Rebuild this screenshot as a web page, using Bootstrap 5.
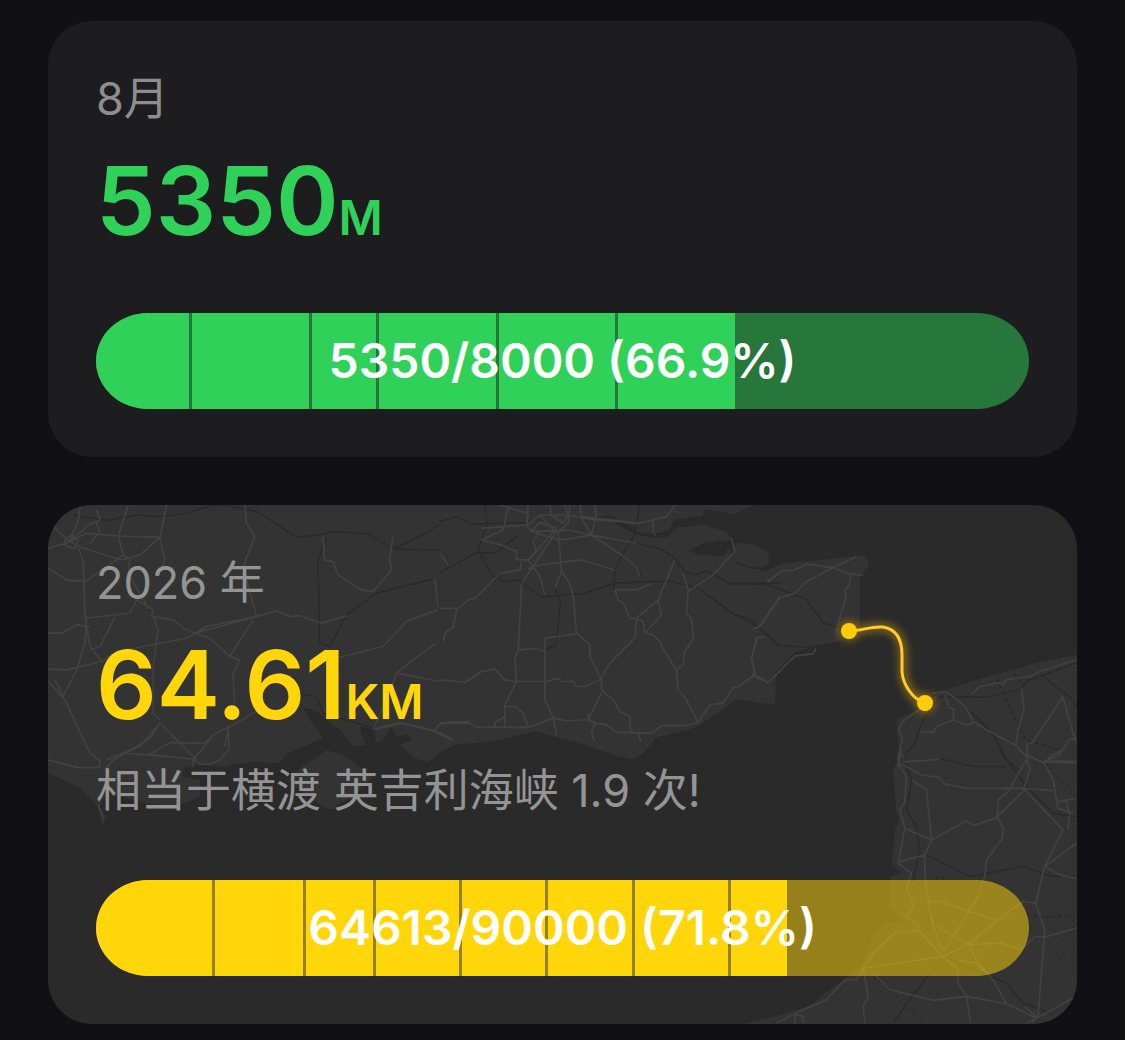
<!DOCTYPE html>
<html lang="zh-CN" data-bs-theme="dark">
<head>
<meta charset="utf-8">
<meta name="viewport" content="width=device-width, initial-scale=1">
<title>距离目标</title>
<link rel="stylesheet" href="https://cdn.jsdelivr.net/npm/bootstrap@5.3.0/dist/css/bootstrap.min.css">
<style>
  body { background: #111015; font-family: Inter, "Noto Sans CJK SC", sans-serif; }
  .goal-list { padding: 21px 48px 16px; gap: 48px; }
  .goal { background: #1d1d1f; border-radius: 44px; padding: 48px; }
  .goal-map { background: #2a2a2a; }
  .map-art { z-index: 0; }
  .goal-body { z-index: 1; }
  .period, .compare { font-size: 45px; line-height: 60px; font-weight: 400; color: #8e8e90; }
  .goal-map .period, .goal-map .compare { color: #949494; }
  .compare { padding: 16px 0 7px; }
  .total { font-size: 95px; line-height: 120px; font-weight: 600; margin: 12px 0 52px; }
  .total-map { margin-bottom: 0; }
  .compare + .meter { margin-top: 52px; }
  .unit { font-size: 48px; line-height: 1; }
  .meter { height: 96px; border-radius: 52px / 48px; }
  .seg { border-right: 3px solid transparent; background-clip: padding-box; }
  .seg:nth-last-child(2) { border-right: 0; }
  .meter-text { font-size: 48px; line-height: 96px; font-weight: 600; }
  .green-ink { color: #30d158; }
  .green-track { background: #27763b; }
  .green-track .seg { background-color: #30d158; }
  .yellow-ink { color: #ffd60a; }
  .yellow-track { background: rgba(255, 214, 10, .5); }
  .yellow-track .seg { background-color: #ffd60a; }
</style>
<script defer src="https://cdn.jsdelivr.net/npm/bootstrap@5.3.0/dist/js/bootstrap.bundle.min.js"></script>
</head>
<body>
<main class="goal-list d-flex flex-column">

  <section class="goal">
    <div class="period">8月</div>
    <div class="total green-ink">5350<span class="unit">M</span></div>
    <div class="meter green-track d-flex position-relative overflow-hidden" role="progressbar" aria-label="8月" aria-valuenow="5350" aria-valuemin="0" aria-valuemax="8000">
      <div class="seg" style="width:10.29%"></div>
      <div class="seg" style="width:12.86%"></div>
      <div class="seg" style="width:7.18%"></div>
      <div class="seg" style="width:12.86%"></div>
      <div class="seg" style="width:12.75%"></div>
      <div class="seg" style="width:12.54%"></div>
      <div class="meter-text position-absolute top-0 start-0 w-100 text-center text-white">5350/8000 (66.9%)</div>
    </div>
  </section>

  <section class="goal goal-map position-relative overflow-hidden">
    <svg class="map-art position-absolute top-0 start-0 w-100 h-100" viewBox="48 505 1029 519" preserveAspectRatio="xMidYMid slice" aria-hidden="true">
      <defs>
        <filter id="glow" x="-30%" y="-30%" width="160%" height="160%"><feGaussianBlur stdDeviation="4"/></filter>
      </defs>
      <!-- land -->
      <g fill="#333333">
        <path d="M48 505H753L735 514L706 509L702 516L675 519L669 530L655 534L640 533L620 522L605 517L620 526L635 534L652 538L668 537L678 527L705 525L727 532L733 540L718 541L704 543L688 551L700 555L724 556L728 548L733 557L736 542L755 545L768 552L770 563L760 568L745 565L734 561L738 565L765 571L785 563L840 558L866 555L869 565L860 576L860 622L842 641L815 646L795 652L776 672L775 705L736 699L725 708L695 728L655 738L645 752L633 759L620 757L585 745L535 731L500 740L455 745L440 752L428 763L413 757L400 745L411 740L408 734L398 737L391 727L382 741L376 743L374 728L360 727L365 745L353 746L340 730L329 722L318 712L303 707L310 720L323 738L303 747L287 753L280 763L253 762L220 767L200 764L183 768L183 777L200 780L200 797L173 807L140 802L107 793L100 807L107 818L102 825L98 807L80 788L48 773Z"/>
        <path d="M327 750L343 755L373 777L358 792L330 810L310 798L287 780L303 766Z"/>
        <path d="M745 1024L807 1007L843 980L860 967L873 937L887 923L903 921L890 907V877L902 873L892 865L895 827L900 822L896 810L893 770L899 758L897 718L920 710L940 692L960 685L1000 673L1040 662L1077 655V1024Z"/>
      </g>
      <!-- railways and motorways -->
      <g fill="none" stroke="#292929" stroke-width="4" stroke-linejoin="round">
        <g transform="translate(40 500) scale(.333)">
          <path d="M100 45L200 62L290 45L360 50L440 40L520 15L560 15L650 35L700 65L770 112L840 105L880 95L985 100L1060 147L1110 125L1200 75M860 115L835 180L840 430L870 440L920 345L1010 280L1190 235M770 580L830 590L850 640L950 670L1010 685M1060 147L1200 150"/>
        </g>
        <g transform="translate(440 500) scale(.333)">
          <path d="M0 65L50 50L95 72L260 68M135 15L142 70L115 150L155 225L190 245L235 240L305 292L435 280L525 250L690 243L775 265L885 345L925 355L1020 438M0 218L110 158L165 160L230 110M345 265L362 310L348 435L315 450M600 15L585 100L525 210L522 270M585 130L660 145L700 170L735 215L770 225L800 212L870 252L1020 250M430 60L510 48L590 90M545 165L590 200L610 235"/>
        </g>
        <g transform="translate(740 500) scale(.333)">
          <path d="M0 250L75 252L150 280L200 300L250 370L310 385M0 352L60 385L115 438L220 442L290 430M500 805L495 765L525 730L545 670L600 590L740 592L840 570L860 545L1010 490M640 590L720 660L770 720L800 780L850 820M910 530L1000 600L1010 620M820 520L840 545"/>
        </g>
        <g transform="translate(740 750) scale(.333)">
          <path d="M500 50L515 90L500 180L530 230L540 300L520 390L560 420L570 550M560 315L690 380L850 350L930 378L1010 380M600 25L700 50L800 50M780 0L860 110L940 190L1010 200M460 820L520 735L610 620L800 700L850 760L930 790"/>
          <path stroke-dasharray="8 10" d="M570 380L610 385L720 460L880 500L1000 500L1000 540L940 600L960 625L1010 585M370 660L430 700L550 820M920 40L960 90L1010 130M900 510L960 495"/>
        </g>
        <path stroke-width="2" stroke-dasharray="3 4" d="M997 679L1018 725L1026 740L1060 750"/>
      </g>
      <!-- roads -->
      <g fill="none" stroke="#424242" stroke-width="5" stroke-linejoin="round">
        <g transform="translate(40 500) scale(.333)">
          <path d="M90 125L40 80M90 125L25 145M90 125L115 60L120 20M90 125L145 75L180 60L170 30M90 125L140 100L235 108L360 112M90 125L130 145L245 180L300 165L360 112L380 15M75 120L95 105L115 120L105 145L80 140ZM165 60L180 95L150 130M235 108L250 60L265 15M235 108L250 165L200 200L135 245L80 240L25 205M115 145L130 185L135 350L150 440L190 490M135 355L270 340L290 300L340 330L335 350L400 360L430 385L465 400L650 350L610 200L645 110L620 70L615 15M225 350L180 440L150 450M25 400L65 400L110 375L150 380M250 165L270 180L265 220L325 325M360 112L375 180L360 215M340 350L355 390L340 500L340 640L360 660M25 508L80 510L185 485L230 455L440 415L500 380L650 350L710 333L750 350L780 347L845 370L920 348M465 400L510 415L570 470L640 360M570 470L600 480L580 520L585 650M25 545L75 600L150 760M45 540L70 590L110 510L135 430L140 350M360 670L430 740L470 780M360 670L300 740L200 780M565 685L640 640L685 615M565 685L555 740M850 110L855 180L880 185L895 225L965 270L1000 275L1055 210L1050 175L1060 110M1185 235L1195 320M870 480L910 470L950 460L1030 440L1100 365L1195 330M1200 545L1070 520L1120 480L1190 430M1070 520L1050 580L1000 690"/>
        </g>
        <g transform="translate(440 500) scale(.333)">
          <path d="M205 20L190 90L125 120L185 135L230 155L230 180H265L350 85M125 85L265 75L300 45H390L430 55L600 70L640 60L680 50L705 15M180 15L265 40L260 75L275 95L385 90L455 105L590 130M265 15L260 75M330 15L335 45L370 70L385 45L375 15M390 15L385 70L350 100L300 45M350 85L300 68L275 92L295 98L280 125L290 155L265 180L300 230L315 285M425 55L455 105L470 45L465 15M420 15L425 50L600 70M455 105L380 118H350L290 100M455 105L545 165L590 200L600 230M350 95L245 250L235 450L290 445L315 455L315 600L340 655M355 95L365 215L390 250L400 290L410 400L450 435L450 470L485 540L485 570L520 600L540 635L570 650L572 700M365 215L345 265M410 402L315 415V455M265 205L300 195L425 180L525 210M245 185L240 210L180 220L105 295L85 300L50 330L40 380L15 400L10 425M0 325H60M0 540L75 548L125 515L165 508L195 540L230 545L320 545L355 535L365 545H400L410 560H435L480 540L510 490L585 415L590 355L570 355L550 310L535 300L525 270M235 450L225 470L230 545L195 615L195 680M195 620H225L250 640L265 680M0 670H90L110 682L265 683L340 655L380 663L445 660L485 580M445 640V660L465 670L455 700L465 725M465 670L500 675L530 697L635 700L665 678L740 677L775 668L740 600L715 570L710 510L665 440V430L640 405L615 400L610 365L590 355L655 300L705 180M655 300L665 345L615 400M710 510L730 495L735 455L762 415L755 355L740 340L745 270L730 220M525 270L590 270L635 250M745 275L820 225L885 155L875 115M775 668L810 615L850 610L880 563L895 560L940 528L985 548L1020 515M940 528L945 510L935 475L950 415L970 410M640 60V95L647 107M340 655L350 705M595 700L603 727M980 245L1020 220M1020 290L960 380L940 387M0 160L25 195M0 700L40 720M165 680V668L195 650"/>
        </g>
        <g transform="translate(740 500) scale(.333)">
          <path d="M85 245L125 212H160L200 193L280 203L350 170M280 203L200 245L165 280L120 293L60 380L40 387M280 203L330 222L370 226M332 222L328 255L315 272L318 290L295 370L290 400M75 410L52 415L35 475L45 525L0 558M45 525L85 548L165 468L220 462L228 445M475 800V770L488 715L475 690L490 665L530 635L580 600M580 580L615 575L640 590L680 625L700 665L740 690L830 738M615 585L625 620L643 630L640 660L590 680L580 698H540M640 660L680 675L700 670M695 585L720 560L780 548L790 555L800 540L870 530L900 515L1010 480M845 565L853 630L835 690L828 738M970 590L1000 700L1010 725M970 590L880 725L862 735V790M1010 718H990L960 765L920 785H1010M475 770H495M830 738L860 770"/>
        </g>
        <g transform="translate(740 750) scale(.333)">
          <path d="M485 0L475 40L500 80L495 155L480 180L495 235L475 340L515 370L500 415L520 470L500 505L530 515L540 545L600 610L655 660L655 700L680 740L693 820M475 40L500 50L545 75L595 82L615 102L680 115H850L940 122M490 35L510 35L600 28M515 90L560 120L575 270L555 315L555 380L565 450L565 470L600 590L615 600L710 450L735 380L740 330L788 265L790 235L772 200L850 125L870 60L860 20L840 0M575 270L495 235M575 270L680 213L700 227L772 203L775 150L805 125L860 30M480 335L555 315M565 455H600L770 512L850 455L888 460L915 350L970 240L850 115M770 515L690 580L610 620L375 655M590 530L690 585L780 578L845 600L885 560L915 562L1010 535M888 460L915 540L895 800M915 350L960 375L1010 385M915 350L1010 280M860 15L915 40L940 90L955 175L1000 190M910 35L1010 38M955 155L1010 145M980 150L990 190L985 240M540 545L470 545L405 605L370 655L350 690H315L260 750L190 780L110 820M370 655L385 740L370 770L375 820M400 670L450 720L580 752L680 740L800 762L890 805M690 585L710 630L760 690L800 762M655 630L710 640L750 680M1000 745L920 790L860 820M855 770L890 800L880 820M165 820V795L190 800V820M910 40L940 15L970 0"/>
        </g>
        <g transform="translate(40 690) scale(.333)">
          <path d="M150 190L180 212L178 235M25 210L115 233H178M195 240L220 210L255 190L325 195L430 205L460 208L490 175L520 135L570 108M255 190L330 145L360 100M325 195L390 158L495 160L520 135M565 115L567 180L540 210L510 223H480L460 208V232M175 345L190 385"/>
        </g>
        <path stroke-width="2" d="M375 729L401 723L419 727L434 731L440 724L452 722H470M434 731L452 740"/>
      </g>
      <!-- crossing route -->
      <g fill="none" stroke="#ffb800" stroke-width="7" opacity=".5" filter="url(#glow)">
        <path d="M849 631C862 631 870 626 883 627C895 629 903 638 903 655V672C904 684 912 699 925 703"/>
        <circle cx="849" cy="631" r="6"/><circle cx="925" cy="703" r="6"/>
      </g>
      <path fill="none" stroke="#ffcc2b" stroke-width="3" d="M849 631C862 631 870 626 883 627C895 629 902 638 902 655V672C903 684 912 699 925 703"/>
      <circle cx="849" cy="631" r="8" fill="#ffcc0a"/><circle cx="925" cy="703" r="8" fill="#ffcc0a"/>
    </svg>

    <div class="goal-body position-relative">
      <div class="period">2026 年</div>
      <div class="total total-map yellow-ink">64.61<span class="unit">KM</span></div>
      <div class="compare">相当于横渡 英吉利海峡 1.9 次!</div>
      <div class="meter yellow-track d-flex position-relative overflow-hidden" role="progressbar" aria-label="2026 年" aria-valuenow="64613" aria-valuemin="0" aria-valuemax="90000">
        <div class="seg" style="width:12.75%"></div>
        <div class="seg" style="width:9.75%"></div>
        <div class="seg" style="width:7.5%"></div>
        <div class="seg" style="width:9.22%"></div>
        <div class="seg" style="width:9.22%"></div>
        <div class="seg" style="width:9.32%"></div>
        <div class="seg" style="width:10.29%"></div>
        <div class="seg" style="width:6.01%"></div>
        <div class="meter-text position-absolute top-0 start-0 w-100 text-center text-white">64613/90000 (71.8%)</div>
      </div>
    </div>
  </section>

</main>
</body>
</html>
